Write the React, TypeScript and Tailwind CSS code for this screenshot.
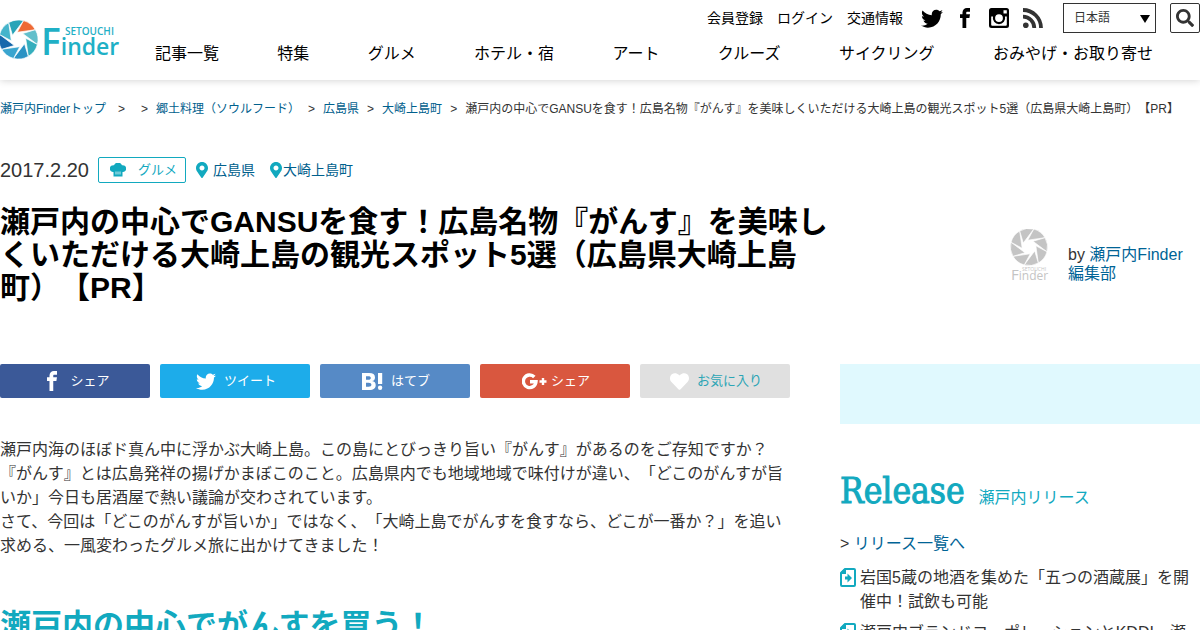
import React, { useState } from "react";
import { FaHeart, FaMapMarkerAlt, FaSearch } from "react-icons/fa";
import { ImFacebook, ImTwitter } from "react-icons/im";

const navItems = [
  "記事一覧",
  "特集",
  "グルメ",
  "ホテル・宿",
  "アート",
  "クルーズ",
  "サイクリング",
  "おみやげ・お取り寄せ",
];

const breadcrumbs = ["郷土料理（ソウルフード）", "広島県", "大崎上島町"];

const releases = [
  "岩国5蔵の地酒を集めた「五つの酒蔵展」を開催中！試飲も可能",
  "瀬戸内ブランドコーポレーションとKDDI、瀬戸内の観光振興で連携",
];

// Blades run clockwise from the one just right of the top
const BLADE = "M5 -18.9 A19.5 19.5 0 0 1 16.9 -9.800 L-1.300 -7.200 Z";
const colorBlades = ["#ee6a35", "#62bfcb", "#35aebd", "#2b93c4", "#3aa5cf", "#1767ab", "#45b4cb", "#28a4b8"];

// Camera shutter mark
function Shutter({ colors }: { colors: string[] }) {
  return (
    <g>
      {colors.map((color, i) => (
        <path
          key={i}
          d={BLADE}
          fill={color}
          stroke="#fff"
          strokeWidth="0.7"
          transform={`rotate(${i * 45})`}
        />
      ))}
    </g>
  );
}

function Logo() {
  return (
    <svg viewBox="0 0 120 44" className="h-11 w-[120px]" role="img" aria-label="SETOUCHI Finder">
      <g transform="translate(18.5 21.5)">
        <Shutter colors={colorBlades} />
      </g>
      <g fill="#1fb0c6" className="font-['Open_Sans',sans-serif]">
        <text x="65" y="17" fontSize="10" fontWeight="600">
          SETOUCHI
        </text>
        <text x="41" y="37" fontSize="23" fontWeight="600">
          <tspan fontSize="37">F</tspan>
          inder
        </text>
      </g>
    </svg>
  );
}

function AuthorMark() {
  return (
    <svg viewBox="0 0 40 56" className="h-14 w-10 shrink-0" aria-hidden="true">
      <g transform="translate(20 18) scale(0.95)">
        <Shutter colors={Array(8).fill("#c4c4c4")} />
      </g>
      <g fill="#c4c4c4" className="font-['Open_Sans',sans-serif]">
        <text x="13" y="42" fontSize="5">
          SETOUCHI
        </text>
        <text x="2" y="51" fontSize="12">
          <tspan fontSize="15">F</tspan>
          inder
        </text>
      </g>
    </svg>
  );
}

function InstagramIcon() {
  return (
    <svg viewBox="0 0 20 20" className="size-5" aria-hidden="true">
      <path
        fillRule="evenodd"
        d="M2.500 0h15A2.500 2.500 0 0 1 20 2.500v15a2.500 2.500 0 0 1-2.500 2.500h-15A2.500 2.500 0 0 1 0 17.500v-15A2.500 2.500 0 0 1 2.500 0zM14.500 2.200v3.300h3.300V2.200zM2.200 8.500v8.200a1 1 0 0 0 1 1h13.600a1 1 0 0 0 1-1V8.500H16a6.200 6.200 0 1 1-12 0zM10 6.200a3.900 3.900 0 1 0 0 7.800a3.900 3.900 0 0 0 0-7.800z"
      />
    </svg>
  );
}

function RssIcon() {
  return (
    <svg viewBox="0 0 20 20" className="size-5" aria-hidden="true">
      <circle cx="2.800" cy="17.200" r="2.800" fill="currentColor" />
      <path d="M0 8.700A11.300 11.300 0 0 1 11.300 20M0 2A18 18 0 0 1 18 20" fill="none" stroke="currentColor" strokeWidth="3.800" />
    </svg>
  );
}

function ChefHatIcon() {
  return (
    <svg viewBox="0 0 16 14" className="h-3.5 w-4" fill="#12a9bf" aria-hidden="true">
      <path d="M3.500 9A3.400 3.400 0 1 1 4 2.300A4.300 4.300 0 0 1 12 2.300A3.400 3.400 0 1 1 12.500 9V13.500H3.500Z" />
      <path d="M6 8.500v3M8 8.500v3M10 8.500v3" stroke="#fff" strokeWidth="0.8" />
    </svg>
  );
}

function HatenaIcon() {
  return (
    <svg viewBox="0 0 21 17" className="h-[17px] w-[21px]" fill="currentColor" aria-hidden="true">
      <path
        fillRule="evenodd"
        d="M0 0h7c4 0 6 1.400 6 4.400c0 2-1 3.200-3 3.600c2.500.4 3.700 1.800 3.700 4c0 3.300-2.200 5-6.200 5H0zM4 3.200v3.600h2.300c1.700 0 2.500-.6 2.500-1.800S8 3.200 6.300 3.200zM4 9.800v4h2.600c1.900 0 2.800-.7 2.800-2s-.9-2-2.800-2z"
      />
      <path d="M16 0h4.200v11H16z" />
      <circle cx="18.100" cy="14.700" r="2.200" />
    </svg>
  );
}

function GooglePlusIcon() {
  return (
    <svg viewBox="0 0 25 17" className="h-[17px] w-[25px]" fill="none" stroke="currentColor" aria-hidden="true">
      <path d="M12.300 4A6.300 6.300 0 1 0 14 8.700H8" strokeWidth="3.400" />
      <path d="M21 5v7M17.500 8.500h7" strokeWidth="2.400" />
    </svg>
  );
}

function ReleaseIcon() {
  return (
    <svg viewBox="0 0 16 19" className="mt-0.5 h-[19px] w-4 shrink-0" aria-hidden="true">
      <path d="M5 1h9a1 1 0 0 1 1 1v15a1 1 0 0 1-1 1H2a1 1 0 0 1-1-1V5z" fill="none" stroke="#12a9bf" strokeWidth="2" />
      <path d="M1 6V4L4 1H6V6Z" fill="#12a9bf" />
      <path d="M5 8.500h2.500V5.500L12 10l-4.500 4.500v-3H5z" fill="#12a9bf" />
    </svg>
  );
}

const shareButtons = [
  { label: "シェア", style: "bg-[#3b5998] text-white gap-2", icon: <ImFacebook className="size-5" /> },
  { label: "ツイート", style: "bg-[#1dacea] text-white gap-2", icon: <ImTwitter className="size-5" /> },
  { label: "はてブ", style: "bg-[#568ac6] text-white gap-2", icon: <HatenaIcon /> },
  { label: "シェア", style: "bg-[#d9573f] text-white gap-1", icon: <GooglePlusIcon /> },
  { label: "お気に入り", style: "bg-[#e0e0e0] text-[#2ba5b5] gap-2", icon: <FaHeart className="size-[19px] text-white" /> },
];

export default function App() {
  const [language, setLanguage] = useState("ja");

  return (
    <div className="h-screen overflow-hidden bg-white font-['Liberation_Sans','Noto_Sans_CJK_JP',sans-serif] text-[#333] [text-spacing-trim:space-all]">
      <header className="flex h-20 shadow-[0_0_8px_rgba(0,0,0,0.2)]">
        <a href="#" className="mt-[18px] h-11 shrink-0">
          <Logo />
        </a>
        <div className="grow">
          <div className="flex h-9 items-center justify-end text-sm text-black">
            <div className="flex gap-3.5">
              <a href="#">会員登録</a>
              <a href="#">ログイン</a>
              <a href="#">交通情報</a>
            </div>
            <div className="ml-[18px] flex items-center">
              <a href="#" aria-label="Twitter">
                <ImTwitter className="size-[22px]" />
              </a>
              <a href="#" aria-label="Facebook" className="ml-3">
                <ImFacebook className="size-5" />
              </a>
              <a href="#" aria-label="Instagram" className="ml-3.5">
                <InstagramIcon />
              </a>
              <a href="#" aria-label="RSS" className="ml-3.5 text-[#333]">
                <RssIcon />
              </a>
            </div>
            <div className="relative ml-5">
              <select
                aria-label="言語"
                value={language}
                onChange={(e) => setLanguage(e.target.value)}
                className="block h-[30px] w-[93px] appearance-none border border-[#333] bg-white pl-2.5 text-xs text-[#333]"
              >
                <option value="ja">日本語</option>
                <option value="en">English</option>
              </select>
              <svg viewBox="0 0 10 8" className="pointer-events-none absolute top-3 right-1.5 h-2 w-2.5" aria-hidden="true">
                <path d="M0 0h10L5 8z" />
              </svg>
            </div>
            <button
              aria-label="検索"
              className="ml-3.5 flex h-[30px] w-[30px] items-center justify-center rounded-xs border border-[#333] text-[#333]"
            >
              <FaSearch className="size-[18px]" />
            </button>
          </div>
          <nav className="flex justify-between pt-1.5 pr-[47px] pl-[35px] text-base text-black">
            {navItems.map((item) => (
              <a key={item} href="#">
                {item}
              </a>
            ))}
          </nav>
        </div>
      </header>

      <nav className="flex pt-[21px] text-xs leading-4 whitespace-nowrap text-[#333]">
        <a href="#" className="mr-3 text-[#00608d]">
          瀬戸内Finderトップ
        </a>
        <span className="mr-4">&gt;</span>
        {breadcrumbs.map((crumb) => (
          <span key={crumb} className="mr-2">
            &gt;
            <a href="#" className="ml-2 text-[#00608d]">
              {crumb}
            </a>
          </span>
        ))}
        <span>&gt;</span>
        <span className="ml-2">
          瀬戸内の中心でGANSUを食す！広島名物『がんす』を美味しくいただける大崎上島の観光スポット5選（広島県大崎上島町）【PR】
        </span>
      </nav>

      <div className="mt-[39px] flex h-7 items-center text-sm">
        <time className="text-xl">2017.2.20</time>
        <a
          href="#"
          className="ml-[9px] flex h-[26px] w-[88px] items-center justify-between rounded-xs border border-[#12a9bf] pr-2 pl-[11px] text-[13px] text-[#12a9bf]"
        >
          <ChefHatIcon />
          グルメ
        </a>
        <FaMapMarkerAlt className="ml-2.5 h-4 w-3 text-[#12a9bf]" />
        <a href="#" className="ml-[5px] text-[#00608d]">
          広島県
        </a>
        <FaMapMarkerAlt className="ml-[15px] h-4 w-3 text-[#12a9bf]" />
        <a href="#" className="ml-px text-[#00608d]">
          大崎上島町
        </a>
      </div>

      <div className="mt-[21px] flex justify-between">
        <h1 className="w-[70%] text-[30px] leading-[33px] font-bold text-black">
          瀬戸内の中心でGANSUを食す！広島名物『がんす』を美味しくいただける大崎上島の観光スポット5選（広島県大崎上島町）【PR】
        </h1>
        <div className="mt-6 flex w-[191px] gap-[19px]">
          <AuthorMark />
          <p className="mt-4 pr-4 leading-[19px]">
            by{" "}
            <a href="#" className="text-[#006496]">
              瀬戸内Finder編集部
            </a>
          </p>
        </div>
      </div>

      <div className="mt-[60px] flex justify-between">
        <main className="w-[790px]">
          <div className="grid grid-cols-5 gap-2.5">
            {shareButtons.map((button, i) => (
              <button
                key={i}
                className={`flex h-[34px] items-center justify-center rounded-xs pl-0.5 text-[13px] ${button.style}`}
              >
                {button.icon}
                {button.label}
              </button>
            ))}
          </div>
          <p className="mt-10 leading-6">
            瀬戸内海のほぼド真ん中に浮かぶ大崎上島。この島にとびっきり旨い『がんす』があるのをご存知ですか？
            <br />
            『がんす』とは広島発祥の揚げかまぼこのこと。広島県内でも地域地域で味付けが違い、「どこのがんすが旨いか」今日も居酒屋で熱い議論が交わされています。
            <br />
            さて、今回は「どこのがんすが旨いか」ではなく、「大崎上島でがんすを食すなら、どこが一番か？」を追い求める、一風変わったグルメ旅に出かけてきました！
          </p>
          <h2 className="mt-[50px] text-[31px] leading-9 font-bold text-[#12a9bf]">瀬戸内の中心でがんすを買う！</h2>
        </main>

        <aside className="w-[360px]">
          <div className="h-[60px] bg-[#e0f9fe]" />
          <h2 className="mt-10 flex items-baseline gap-3.5 text-[#12a9bf]">
            <span className="font-['DejaVu_Serif_Condensed','DejaVu_Serif',serif] text-[35px] leading-[54px] [-webkit-text-stroke:1px_#12a9bf]">
              Release
            </span>
            <span className="text-base">瀬戸内リリース</span>
          </h2>
          <p className="mt-3.5 leading-6">
            &gt;{" "}
            <a href="#" className="text-[#006496]">
              リリース一覧へ
            </a>
          </p>
          <ul className="mt-2.5">
            {releases.map((release) => (
              <li key={release} className="mb-[7px] flex gap-1 leading-6">
                <ReleaseIcon />
                <a href="#">{release}</a>
              </li>
            ))}
          </ul>
        </aside>
      </div>
    </div>
  );
}
